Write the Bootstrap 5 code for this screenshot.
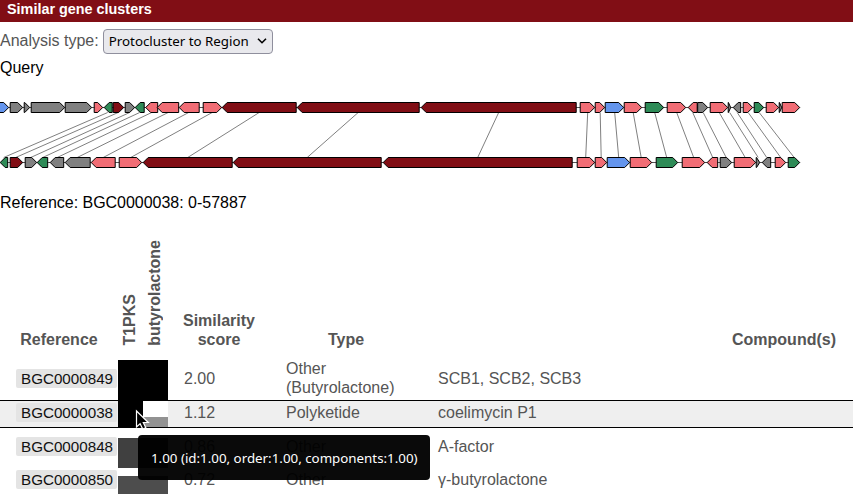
<!DOCTYPE html>
<html lang="en">
<head>
<meta charset="utf-8">
<meta name="viewport" content="width=device-width, initial-scale=1">
<title>Similar gene clusters</title>
<link href="https://cdn.jsdelivr.net/npm/bootstrap@5.3.0/dist/css/bootstrap.min.css" rel="stylesheet">
<style>
body{font:16px/19px "Liberation Sans",Arial,sans-serif;color:#555;background:#fff;height:497px;overflow:hidden}
.titlebar{height:22px;background:#810e15;color:#fff;font-size:14.4px;font-weight:700;padding:0 7px;line-height:18px}
.picker{height:31px;margin-top:4px;padding-bottom:1px}
.picker label{padding-bottom:1px}
.picker select{font:13.33px "Noto Sans",sans-serif;width:170px;height:25px;margin-left:4px;padding:0 5px 0 5px;background:#e9e9ed;border:1px solid #8f8f9d;border-radius:4px;color:#000;appearance:none}
.selectwrap{display:grid;align-items:center}
.selectwrap>*{grid-area:1/1}
.selectwrap svg{justify-self:end;margin-right:6px;pointer-events:none}
.query{height:38px;padding-top:1px;color:#000}
.clusters{display:block;width:853px;height:85px}
.ref-label{height:58px;padding-top:13px;color:#000;letter-spacing:-.02px}
.hits{width:853px}
.hit,.hits-head{display:grid;grid-template-columns:118px 25px 25px 102px 152px 1fr}
.hits-head{height:122px;align-items:end;font-weight:700;text-align:center;padding-bottom:11px}
.upright{writing-mode:vertical-rl;transform:rotate(180deg);justify-self:center;line-height:19px;text-align:left;margin:0 2px 3px 0}
.compounds{padding-right:17px}
.hit{align-items:center;grid-template-rows:100%}
.acc{margin-left:16px;padding:0 4px 0 5px;height:19px;width:101px;background:#e4e4e4;border-radius:2px;color:#111;font-size:15.2px}
.chosen{background:#efefef;border-top:1px solid #000;border-bottom:1px solid #000}
.heat{align-self:end}
.r1{height:40px}.r2{height:28px}.r3{height:40px}.r4{height:26px}
.r2 .heat{height:26px}
.hit>div:not(.heat){margin-bottom:4px}
.tip{position:absolute;left:138px;top:435px;width:292px;height:45px;background:rgba(0,0,0,.96);border-radius:4px;color:#fff;font:13.33px/46px "Noto Sans",sans-serif;padding-left:13px;white-space:nowrap}
.pointer{position:absolute;left:134px;top:409px}
</style>
<script src="https://cdn.jsdelivr.net/npm/bootstrap@5.3.0/dist/js/bootstrap.bundle.min.js"></script>
</head>
<body>
<div class="titlebar">Similar gene clusters</div>
<div class="picker d-flex align-items-center">
  <label for="analysis">Analysis type:</label>
  <div class="selectwrap">
    <select id="analysis"><option>Protocluster to Region</option></select>
    <svg width="10" height="8" viewBox="0 0 10 8" fill="none" stroke="#000" stroke-width="1.6"><path d="M1 1.7 5 5.7 9 1.7"/></svg>
  </div>
</div>
<div class="query">Query</div>
<svg class="clusters" id="clusters" viewBox="0 95 853 85"></svg>
<div class="ref-label">Reference: BGC0000038: 0-57887</div>

<div class="hits">
  <div class="hits-head">
    <div>Reference</div>
    <div class="upright">T1PKS</div>
    <div class="upright">butyrolactone</div>
    <div>Similarity<br>score</div>
    <div>Type</div>
    <div class="text-end compounds">Compound(s)</div>
  </div>
  <div class="hit r1">
    <div class="acc">BGC0000849</div>
    <div class="heat" style="height:40px;background:#000"></div><div class="heat" style="height:40px;background:#000"></div>
    <div class="ps-3">2.00</div><div class="ps-3">Other (Butyrolactone)</div><div class="ps-3">SCB1, SCB2, SCB3</div>
  </div>
  <div class="hit r2 chosen">
    <div class="acc">BGC0000038</div>
    <div class="heat" style="background:#000"></div><div class="heat" style="background:linear-gradient(#fff 16px,#929292 16px)"></div>
    <div class="ps-3">1.12</div><div class="ps-3">Polyketide</div><div class="ps-3">coelimycin P1</div>
  </div>
  <div class="hit r3">
    <div class="acc">BGC0000848</div>
    <div class="heat" style="height:30px;background:#404040"></div><div class="heat" style="height:30px;background:#404040"></div>
    <div class="ps-3">0.86</div><div class="ps-3">Other</div><div class="ps-3">A-factor</div>
  </div>
  <div class="hit r4">
    <div class="acc">BGC0000850</div>
    <div class="heat" style="height:18px;background:#4d4d4d"></div><div class="heat" style="height:18px;background:#4d4d4d"></div>
    <div class="ps-3">0.72</div><div class="ps-3">Other</div><div class="ps-3">γ-butyrolactone</div>
  </div>
</div>
<div class="tip">1.00 (id:1.00, order:1.00, components:1.00)</div>
<svg class="pointer" width="18" height="24" viewBox="0 0 18 24"><path d="M2.5 2v16l3.6-3.3 2.7 5.4 3-1.4-2.5-5.2h5z" fill="#000" stroke="#fff" stroke-width="1.2"/></svg>

<script>
const fills={b:'#6495ed',g:'#808080',p:'#f16d75',d:'#810e15',e:'#2e8b57'};
// Each gene: start, end, fill key, strand (> forward, < reverse)
const query=[[-6,9,'b>'],[10.5,23,'g>'],[24.5,30,'g>'],[31.5,65,'g>'],[65.5,92,'g>'],[94.5,103,'p>'],[104.5,112.5,'e<'],[113.5,124,'d>'],[125.5,135,'g>'],[135.5,144.5,'e<'],[146,158,'p<'],[157.5,179,'p<'],[179.5,199.5,'p<'],[203.5,222,'p>'],[222.5,296.5,'d<'],[297.5,419.5,'d<'],[421.5,576.5,'d<'],[580.5,595,'p>'],[595.5,605,'p>'],[605.5,624,'b>'],[624.5,642,'p>'],[645.5,664,'e>'],[667.5,686,'p>'],[688.5,697.5,'p<'],[698,708,'g>'],[710.5,728,'p>'],[728.5,731,'g>'],[733.5,741,'g<'],[743.5,753,'p>'],[754.5,764,'e>'],[766.5,779,'p>'],[779.5,782,'g>'],[782.5,800,'p>']];
const subject=[[0.5,8,'e<'],[10.5,23,'d>'],[25.5,37,'g>'],[37.5,48,'e<'],[50.5,64,'g<'],[65.5,90.5,'g<'],[91.5,115.5,'p<'],[119.5,142,'p>'],[143.5,232.5,'d<'],[233.5,381.5,'d<'],[383.5,572.5,'d<'],[577.5,595,'p>'],[595.5,607,'p>'],[607.5,630,'b>'],[630.5,652,'p>'],[656.5,678,'e>'],[682.5,705,'p>'],[707.5,718,'p<'],[720.5,732,'g>'],[734.5,756,'p>'],[756.5,760,'g>'],[762.5,771,'g<'],[775.5,786,'p>'],[788.5,800,'e>']];
const pairs=[[108,4],[118.5,16],[130,31],[140,43],[152,57.5],[168.5,77.5],[189,103.5],[212.5,131],[259.5,188],[358.5,307.5],[499,478],[588,586],[600.5,601.5],[615,619],[633.5,641.5],[655,667],[677,694],[693,713],[703.5,726.5],[719.5,745.5],[730,758.5],[737.5,767],[748.5,781],[759.5,794.5]];
let out='<g transform="translate(-.3 0)">';
for(const [a,b] of pairs) out+=`<line x1="${a}" y1="112.5" x2="${b}" y2="157.5" stroke="#808080"/>`;
function track(genes,top){
  const mid=top+5,bot=top+10;
  out+=`<line x1="0" y1="${mid}" x2="800" y2="${mid}" stroke="#555"/>`;
  for(const [s,e,k] of genes){
    const h=Math.min(5,(e-s)*.9);
    const pts=k[1]==='>'?`${s},${top} ${e-h},${top} ${e},${mid} ${e-h},${bot} ${s},${bot}`:`${e},${top} ${s+h},${top} ${s},${mid} ${s+h},${bot} ${e},${bot}`;
    out+=`<polygon points="${pts}" fill="${fills[k[0]]}" stroke="#000"/>`;
  }
}
track(query,102.5);track(subject,157.5);
document.getElementById('clusters').innerHTML=out+'</g>';
</script>
</body>
</html>
